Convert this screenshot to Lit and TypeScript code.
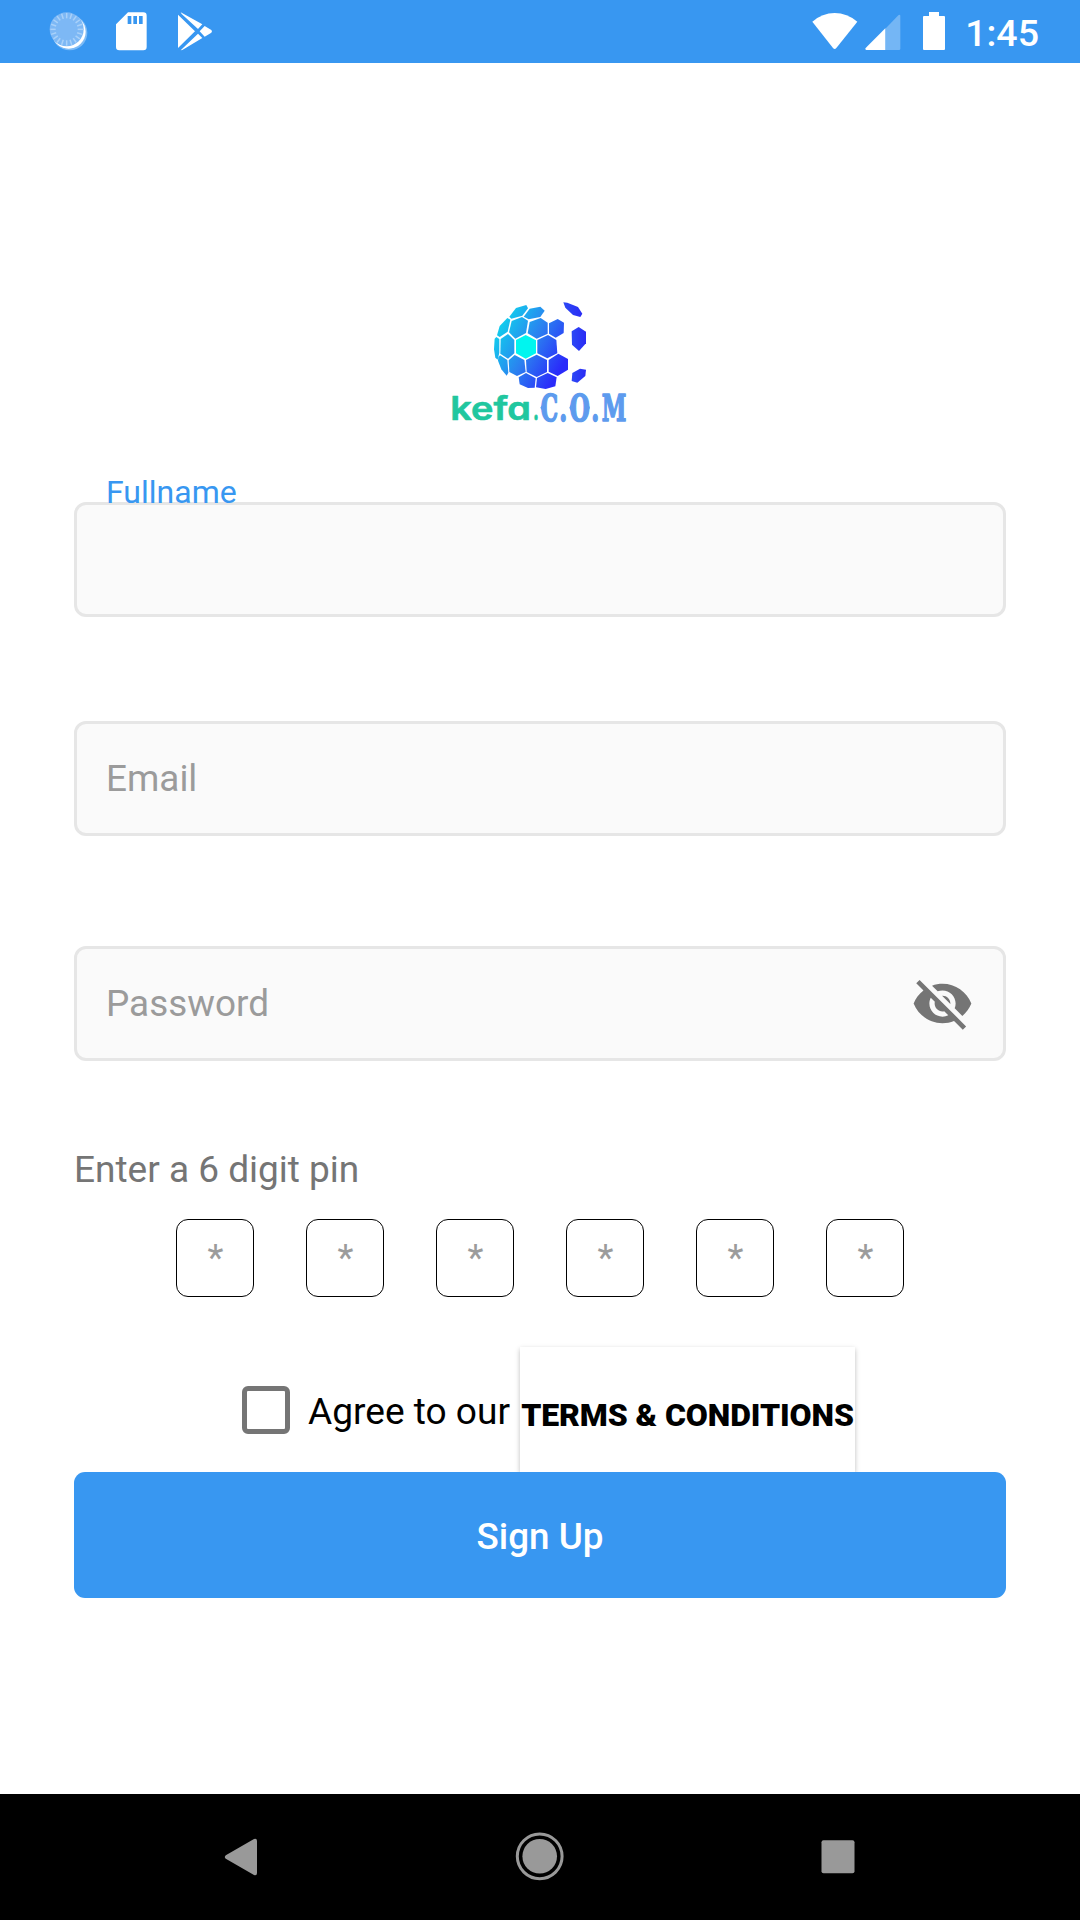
import { LitElement, html, css, svg } from "lit";
import { customElement, property } from "lit/decorators.js";

const ticks = Array.from({ length: 20 }, (_, i) => i * 18);

@customElement("status-bar")
class StatusBar extends LitElement {
  static styles = css`
    :host { display: flex; height: 63px; background: #3897f1; align-items: flex-start; justify-content: space-between; box-sizing: border-box; padding: 10px 41px 0 47px; }
    .group { display: flex; align-items: flex-start; }
    .sync { margin-right: 26px; }
    .card { margin-right: 29px; }
    .cell { margin-left: 7px; }
    .battery { margin-left: 21px; }
    .clock { margin-left: 19px; padding-top: 1px; color: #fff; font: 500 37.5px/44px Roboto, sans-serif; white-space: nowrap; }
    svg { display: block; }
  `;
  render() {
    return html`
      <div class="group">
        <svg class="sync" width="43" height="43" viewBox="141 30 129 129">
          <circle cx="209" cy="98" r="53" fill="#fff" fill-opacity=".35" />
          <circle cx="206" cy="95" r="51" fill="#fff" />
          <circle cx="200" cy="88" r="51" fill="#7db8f5" />
          ${ticks.map((a) => svg`<path d="M200 39v16" stroke="#a9d1f9" stroke-width="4.5" transform="rotate(${a} 200 88)" />`)}
        </svg>
        <svg class="card" width="32" height="43" viewBox="348 30 96 129">
          <path fill="#fff" fill-rule="evenodd" d="M384 37h46q10 0 10 10v94q0 10-10 10h-72q-10 0-10-10V73zM383 48v24h11V48zM400 48v24h11V48zM417 48v24h11V48z" />
        </svg>
        <svg width="36" height="43" viewBox="531 30 108 129">
          <path fill="#fff" d="M534 44L585 94L534 144zM542 37L607 73L594 87L545 42zM542 151L594 101L607 114L547 150zM599 94L614 78L634 90Q638 94 634 98L614 110z" />
        </svg>
      </div>
      <div class="group">
        <svg width="46" height="43" viewBox="97 30 138 129">
          <path fill="#fff" d="M98 65Q128 39 165 39T233 65L170 144Q165 150 160 144z" />
        </svg>
        <svg class="cell" width="36" height="43" viewBox="254 30 108 129">
          <path fill="#fff" fill-opacity=".3" d="M315 86L354 46Q360 42 360 48V146Q360 150 356 150H315z" />
          <path fill="#fff" d="M315 85V150H258Q253 149 256 144z" />
        </svg>
        <svg class="battery" width="24" height="43" viewBox="426 30 72 129">
          <path fill="#fff" d="M447 36h30v12h15q3 0 3 3v96q0 3-3 3h-60q-3 0-3-3V51q0-3 3-3h15z" />
        </svg>
        <span class="clock">1:45</span>
      </div>
    `;
  }
}

@customElement("brand-logo")
class BrandLogo extends LitElement {
  static styles = css`
    :host { display: block; }
    svg { display: block; overflow: visible; }
    .kefa { font: 600 98px Inter, sans-serif; font-feature-settings: "cv11" 1; fill: #20c79f; stroke: #20c79f; stroke-width: 2; stroke-linejoin: round; }
    .com { font: 700 114px "DejaVu Serif", serif; fill: #5d9bee; stroke: #5d9bee; stroke-width: 5; stroke-linejoin: round; }
    .spur { fill: #5d9bee; }
  `;
  render() {
    return html`
      <svg width="200" height="140" viewBox="0 0 600 420" role="img">
        <defs>
          <linearGradient id="globe" gradientUnits="userSpaceOnUse" x1="175" y1="120" x2="365" y2="230">
            <stop offset="0" stop-color="#12cbed" />
            <stop offset=".5" stop-color="#2b80f0" />
            <stop offset="1" stop-color="#2a2bfa" />
          </linearGradient>
          <linearGradient id="shard" x1="0" x2="1" y1="0" y2="0">
            <stop offset="0" stop-color="#2c49f5" />
            <stop offset="1" stop-color="#2a2bf5" />
          </linearGradient>
        </defs>
        <g fill="url(#globe)">
          <path d="M208 80L228 54L259 45L264 55L247 77L214 86z" />
          <path d="M251 80L269 56L301 50L314 62L301 81L266 88z" />
          <path d="M171 136L179 108L202 84L211 89L203 125L179 141z" />
          <path d="M207 127L215 93L246 81L264 92L258 129L226 146z" />
          <path d="M263 130L269 96L302 84L323 98L323 131L290 146z" />
          <path d="M327 100L353 87L372 98L371 129L347 143L327 131z" />
          <path d="M164 146L169 141L178 147V188L173 209L166 203L162 178z" />
          <path d="M182 147L204 132L223 150V190L204 206L181 191z" />
          <path d="M292 150L324 135L349 150L352 190L322 205L292 190z" />
          <path d="M175 201L180 196L202 210L205 248L200 257L184 238L174 212z" />
          <path d="M206 211L224 195L253 210L257 246L231 258L208 246z" />
          <path d="M258 210L290 194L321 210V246L290 261L260 246z" />
          <path d="M326 210L355 191L384 207V239L353 258L326 245z" />
          <path d="M236 262L258 249L287 265L284 293L264 294L239 283z" />
          <path d="M291 264L323 249L350 262L346 289L317 297L288 292z" />
        </g>
        <path fill="#00f5ef" d="M228 150L257 135L288 151V190L257 206L228 190z" />
        <g fill="url(#shard)">
          <path d="M370 37L382 38L414 51L427 71L421 81L399 75L376 53z" />
          <path d="M395 124L416 111L438 125V160L417 183L396 164z" />
          <path d="M397 249L420 236L438 239L436 258L412 278L395 273z" />
        </g>
        <text class="kefa" x="31" y="391" textLength="242" lengthAdjust="spacingAndGlyphs">kefa</text>
        <text class="kefa" x="279" y="391" textLength="18" lengthAdjust="spacingAndGlyphs">.</text>
        <text class="com" x="302" y="394" textLength="52" lengthAdjust="spacingAndGlyphs">C</text>
        <text class="com" x="358" y="394" textLength="24" lengthAdjust="spacingAndGlyphs">.</text>
        <text class="com" x="389" y="394" textLength="60" lengthAdjust="spacingAndGlyphs">O</text>
        <text class="com" x="454" y="394" textLength="24" lengthAdjust="spacingAndGlyphs">.</text>
        <text class="com" x="485" y="394" textLength="74" lengthAdjust="spacingAndGlyphs">M</text>
        <path class="spur" d="M306 345l-5 8 5 8zM393 343l-5 10 5 10zM445 343l5 10-5 10z" />
      </svg>
    `;
  }
}

@customElement("text-field")
class TextField extends LitElement {
  @property() label = "";
  @property({ type: Boolean }) floating = false;
  @property({ type: Boolean }) secret = false;
  static styles = css`
    :host { display: block; position: relative; }
    .box { display: flex; align-items: center; justify-content: space-between; height: 115px; box-sizing: border-box; border: 3px solid #e6e6e6; border-radius: 12px; background: #fafafa; padding: 0 29px 0 29px; }
    .hint { color: #9b9b9b; font: 400 36.9px/44px Roboto, sans-serif; }
    .floating { position: absolute; left: 32px; top: -30px; color: #3897f1; font: 400 32px/40px Roboto, sans-serif; }
    svg { display: block; }
  `;
  render() {
    return html`
      <div class="box">
        ${this.floating ? "" : html`<span class="hint">${this.label}</span>`}
        ${this.secret
          ? html`<svg width="63" height="63" viewBox="0 0 24 24">
              <path fill="#757575" d="M12 7c2.76 0 5 2.24 5 5 0 .65-.13 1.26-.36 1.83l2.92 2.92c1.51-1.26 2.7-2.89 3.43-4.75-1.73-4.39-6-7.5-11-7.5-1.4 0-2.74.25-3.98.7l2.16 2.16C10.74 7.13 11.35 7 12 7zM2 4.27l2.28 2.28.46.46C3.08 8.3 1.78 10.02 1 12c1.73 4.39 6 7.5 11 7.5 1.55 0 3.03-.3 4.38-.84l.42.42L19.73 22 21 20.73 3.27 3 2 4.27zM7.53 9.8l1.55 1.55c-.05.21-.08.43-.08.65 0 1.66 1.34 3 3 3 .22 0 .44-.03.65-.08l1.55 1.55c-.67.33-1.41.53-2.2.53-2.76 0-5-2.24-5-5 0-.79.2-1.53.53-2.2zm4.31-.78l3.15 3.15.02-.16c0-1.66-1.34-3-3-3l-.17.01z" />
            </svg>`
          : ""}
      </div>
      ${this.floating ? html`<span class="floating">${this.label}</span>` : ""}
    `;
  }
}

@customElement("nav-bar")
class NavBar extends LitElement {
  static styles = css`
    :host { display: flex; height: 126px; box-sizing: border-box; background: #000; justify-content: space-between; align-items: center; padding: 0 225px 2px 224px; }
    svg { display: block; }
  `;
  render() {
    return html`
      <svg width="34" height="50" viewBox="0 0 34 50" fill="#999"><path d="M1.8 24.2L30 8q3-1 3 2v32q0 3-3 2L1.8 27.8q-2-1.8 0-3.6z" /></svg>
      <svg width="50" height="50" viewBox="0 0 50 50"><circle cx="24.7" cy="25.3" r="22.4" fill="none" stroke="#999" stroke-width="3" /><circle cx="24.7" cy="25.3" r="17.3" fill="#999" /></svg>
      <svg width="34" height="50" viewBox="0 0 34 50" fill="#999"><rect x=".5" y="9.3" width="33" height="33" rx="2" /></svg>
    `;
  }
}

@customElement("app-root")
class AppRoot extends LitElement {
  static styles = css`
    :host { display: flex; flex-direction: column; width: 1080px; height: 1920px; background: #fff; overflow: hidden; font-family: Roboto, sans-serif; }
    .page { flex: 1; display: flex; flex-direction: column; box-sizing: border-box; padding: 227px 74px 0; }
    .logo { align-self: center; margin-bottom: 72px; }
    .email { margin-top: 104px; }
    .password { margin-top: 110px; }
    .caption { margin-top: 87px; color: #757575; font-size: 37px; line-height: 43px; }
    .pins { display: flex; justify-content: center; gap: 52px; margin-top: 28px; }
    .pin { display: flex; align-items: center; justify-content: center; width: 78px; height: 78px; box-sizing: border-box; border: 1px solid #000; border-radius: 12px; padding-left: 1px; color: #9b9b9b; font-size: 37px; line-height: 44px; }
    .agree { display: flex; align-items: center; height: 125px; margin-top: 50px; padding-left: 168px; }
    .check { box-sizing: border-box; width: 48px; height: 48px; margin-top: 1px; border: 5px solid #757575; border-radius: 6px; }
    .text { width: 212px; margin-left: 18px; padding-top: 5px; color: #000; font-size: 37.1px; line-height: 44px; white-space: nowrap; }
    .terms { display: flex; align-items: center; justify-content: center; width: 335px; height: 125px; box-sizing: border-box; padding-top: 10px; background: #fff; box-shadow: 0 2px 5px rgba(0, 0, 0, .26); color: #000; font-size: 32px; font-weight: 900; letter-spacing: -.1px; white-space: nowrap; }
    .signup { position: relative; display: flex; align-items: center; justify-content: center; height: 126px; box-sizing: border-box; padding-top: 2px; border-radius: 11px; background: #3897f1; color: #fff; font-size: 36.8px; font-weight: 500; }
  `;
  render() {
    return html`
      <status-bar></status-bar>
      <main class="page">
        <brand-logo class="logo"></brand-logo>
        <text-field label="Fullname" floating></text-field>
        <text-field class="email" label="Email"></text-field>
        <text-field class="password" label="Password" secret></text-field>
        <div class="caption">Enter a 6 digit pin</div>
        <div class="pins">${[1, 2, 3, 4, 5, 6].map(() => html`<div class="pin">*</div>`)}</div>
        <div class="agree">
          <div class="check"></div>
          <div class="text">Agree to our</div>
          <div class="terms">TERMS &amp; CONDITIONS</div>
        </div>
        <div class="signup">Sign Up</div>
      </main>
      <nav-bar></nav-bar>
    `;
  }
}
